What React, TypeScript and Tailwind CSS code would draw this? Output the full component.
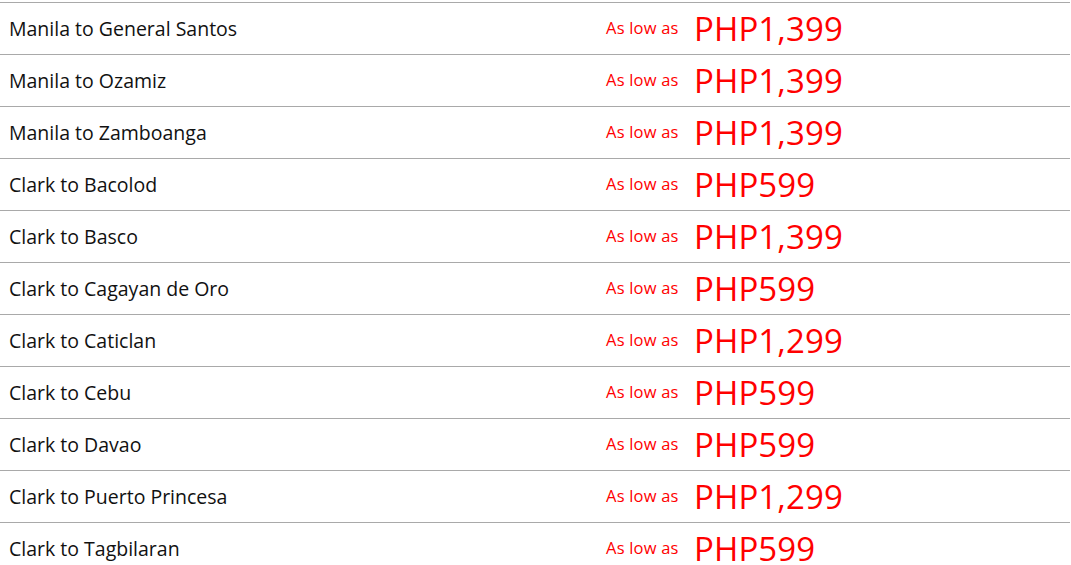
const routes = [
  { name: "Manila to General Santos", price: "PHP1,399" },
  { name: "Manila to Ozamiz", price: "PHP1,399" },
  { name: "Manila to Zamboanga", price: "PHP1,399" },
  { name: "Clark to Bacolod", price: "PHP599" },
  { name: "Clark to Basco", price: "PHP1,399" },
  { name: "Clark to Cagayan de Oro", price: "PHP599" },
  { name: "Clark to Caticlan", price: "PHP1,299" },
  { name: "Clark to Cebu", price: "PHP599" },
  { name: "Clark to Davao", price: "PHP599" },
  { name: "Clark to Puerto Princesa", price: "PHP1,299" },
  { name: "Clark to Tagbilaran", price: "PHP599" },
];

export default function App() {
  return (
    <div className="w-[1071px] bg-white pt-[2px] font-['Open_Sans',sans-serif]">
      {routes.map((r) => (
        <div
          key={r.name}
          className="flex h-[52px] w-[1070px] items-center border-t border-[#a9a9a9]"
        >
          <div className="w-[606px] pl-[9px] text-[19.5px] text-[#111]">{r.name}</div>
          <div className="w-[88px] text-[16.5px] tracking-[0.2px] text-[#ff0000]">As low as</div>
          <div className="text-[33px] leading-none tracking-[0.1px] text-[#ff0000]">{r.price}</div>
        </div>
      ))}
    </div>
  );
}
